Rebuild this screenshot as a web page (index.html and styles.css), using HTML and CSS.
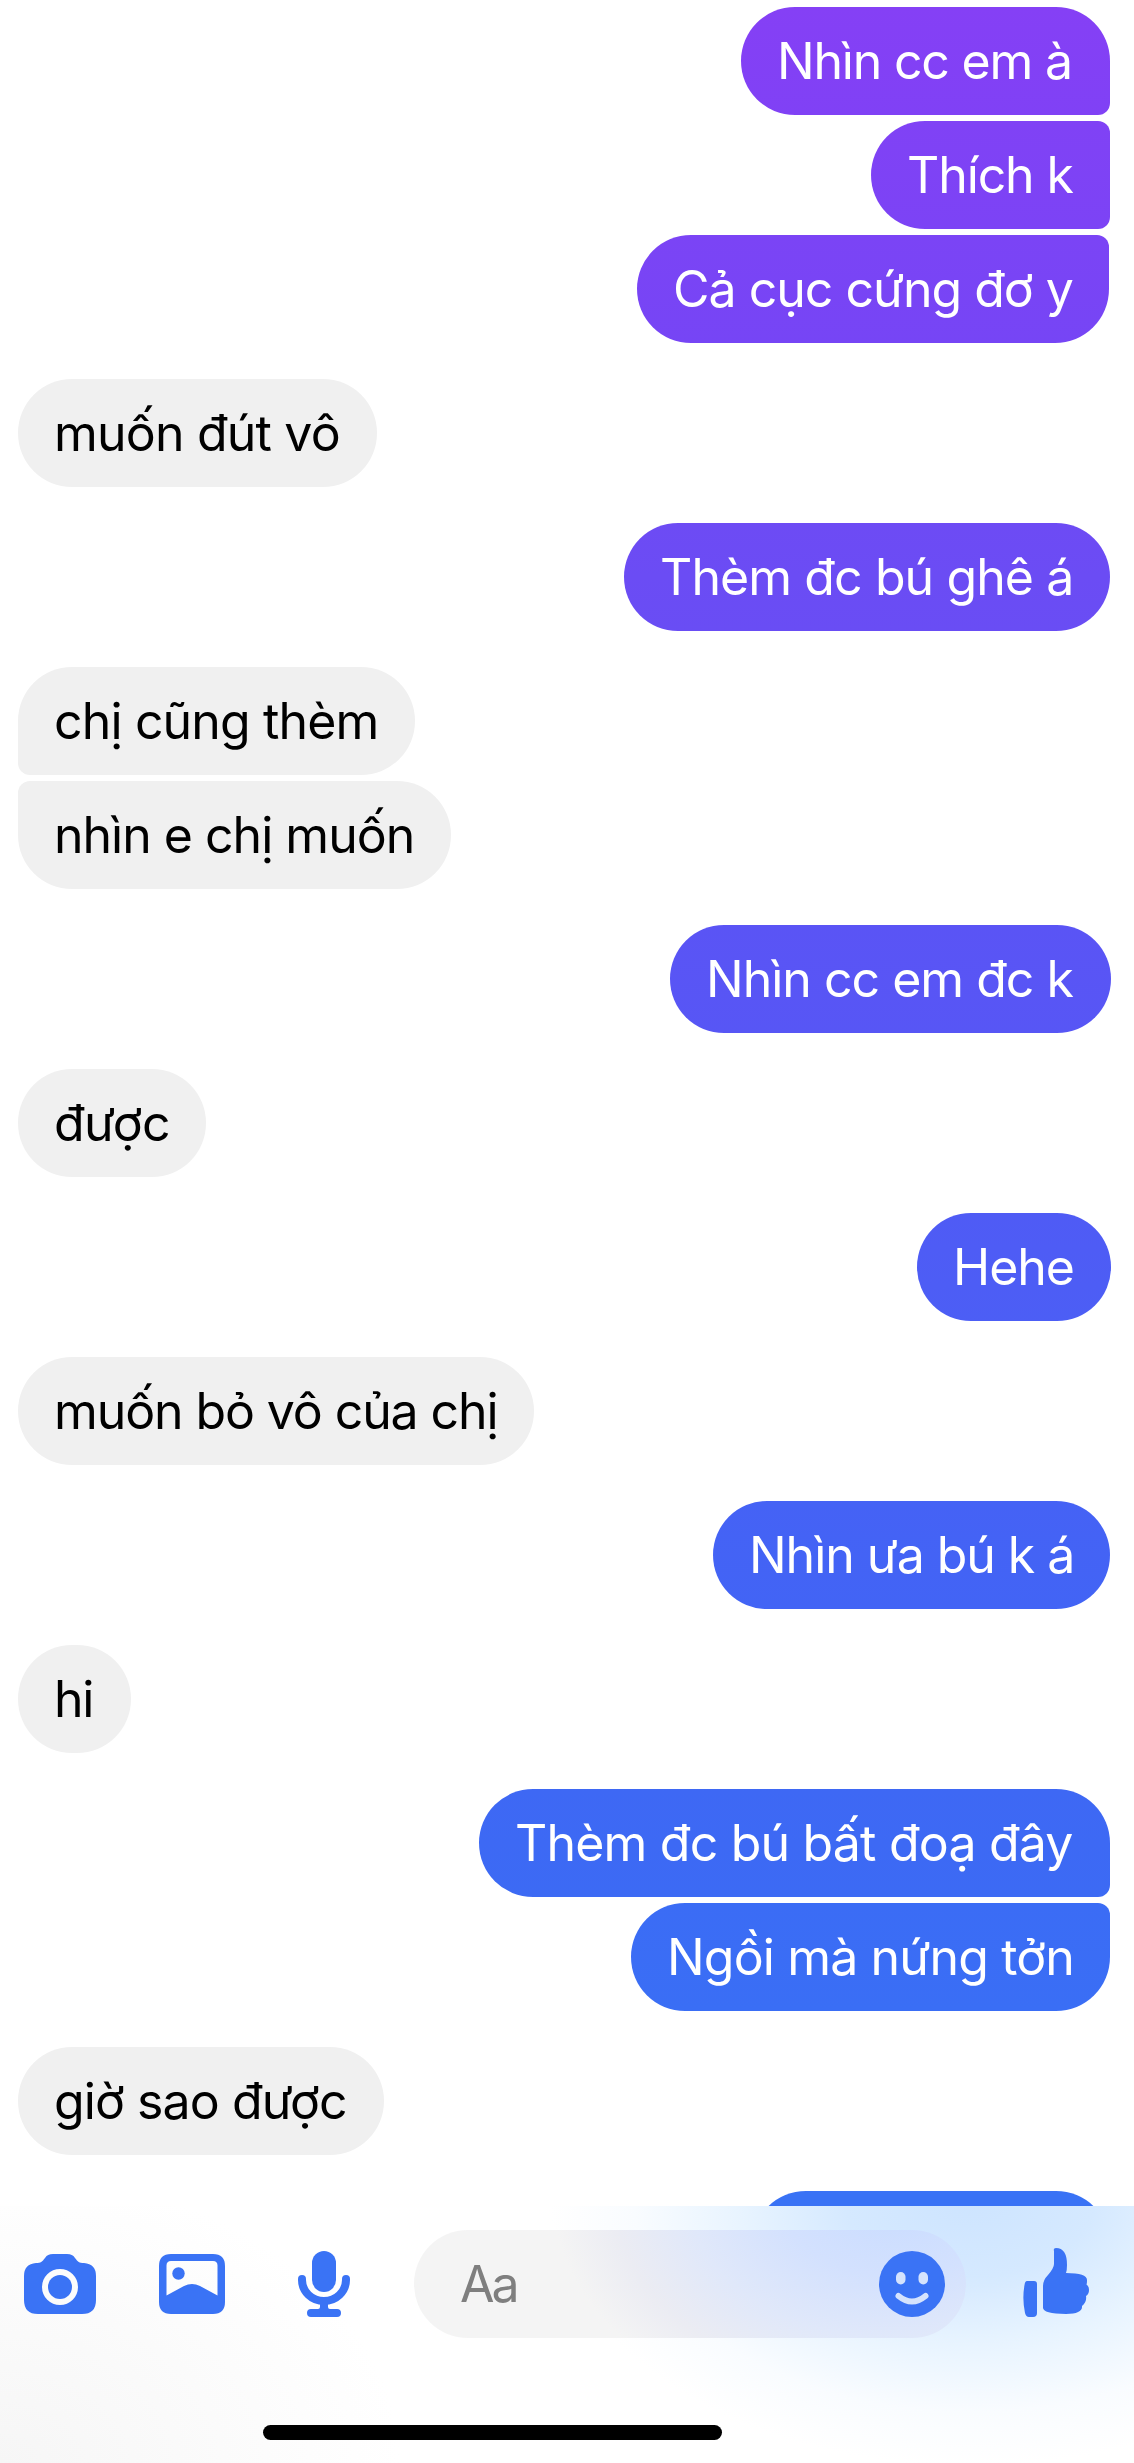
FILE: index.html
```html
<!DOCTYPE html>
<html lang="vi">
<head>
<meta charset="utf-8">
<title>Chat</title>
<link rel="stylesheet" href="styles.css">
</head>
<body>
<main class="screen">
  <section class="thread">
    <div class="group sent">
      <p class="bubble c1" style="width:369px;letter-spacing:-1.2px"><span>Nhìn cc em à</span></p>
      <p class="bubble c2" style="width:239px;letter-spacing:-1.1px"><span>Thích k</span></p>
      <p class="bubble c3" style="width:472px;letter-spacing:-1px"><span>Cả cục cứng đơ y</span></p>
    </div>
    <div class="group received"><p class="bubble" style="width:359px;letter-spacing:-.8px"><span>muốn đút vô</span></p></div>
    <div class="group sent"><p class="bubble c4" style="width:486px;letter-spacing:-.9px"><span>Thèm đc bú ghê á</span></p></div>
    <div class="group received">
      <p class="bubble" style="width:397px;letter-spacing:-.85px"><span>chị cũng thèm</span></p>
      <p class="bubble" style="width:433px;letter-spacing:-1px"><span>nhìn e chị muốn</span></p>
    </div>
    <div class="group sent"><p class="bubble wide c5" style="width:441px;letter-spacing:-1px"><span>Nhìn cc em đc k</span></p></div>
    <div class="group received"><p class="bubble" style="width:188px;letter-spacing:-.6px"><span>được</span></p></div>
    <div class="group sent"><p class="bubble wide c6" style="width:194px;letter-spacing:-1px"><span>Hehe</span></p></div>
    <div class="group received"><p class="bubble" style="width:516px;letter-spacing:-1.1px"><span>muốn bỏ vô của chị</span></p></div>
    <div class="group sent"><p class="bubble c7" style="width:397px;letter-spacing:-1.05px"><span>Nhìn ưa bú k á</span></p></div>
    <div class="group received"><p class="bubble" style="width:113px;letter-spacing:-1.2px"><span>hi</span></p></div>
    <div class="group sent">
      <p class="bubble c8" style="width:631px;letter-spacing:-.8px"><span>Thèm đc bú bất đoạ đây</span></p>
      <p class="bubble c9" style="width:479px;letter-spacing:-.85px"><span>Ngồi mà nứng tởn</span></p>
    </div>
    <div class="group received"><p class="bubble" style="width:366px;letter-spacing:-.9px"><span>giờ sao được</span></p></div>
    <div class="group sent"><p class="bubble c10" style="width:358px"></p></div>
  </section>
  <footer class="composer">
    <div class="toolbar">
      <svg class="icon camera" viewBox="0 0 72 60"><path fill-rule="evenodd" d="M12 9C17 9 18 8 21 4C23 1 25 0 29 0H43C47 0 49 1 51 4C54 8 55 9 60 9Q72 10 72 22V46Q72 60 58 60H14Q0 60 0 46V22Q0 10 12 9ZM36 15A18 18 0 1 0 36 51A18 18 0 1 0 36 15Z"/><circle cx="36" cy="33" r="12"/></svg>
      <svg class="icon photo" viewBox="0 0 66 60"><path fill-rule="evenodd" d="M12 0H54Q66 0 66 12V48Q66 60 54 60H12Q0 60 0 48V12Q0 0 12 0ZM12 7Q7.500 7 7.500 11.500V41.500L25 32Q33 28 41 32L58.500 41.500V11.500Q58.500 7 54 7Z"/><circle cx="19.500" cy="19.500" r="6.200"/></svg>
      <svg class="icon mic" viewBox="0 0 52 66"><rect x="14" y="0" width="24" height="41" rx="12"/><path class="line" d="M4 28V29A22 21 0 0 0 48 29V28"/><path d="M22 50H30V56Q30 58 32 58H39Q43 58 43 62Q43 66 39 66H13Q9 66 9 62Q9 58 13 58H20Q22 58 22 56Z"/></svg>
      <div class="field"><span class="hint">Aa</span>
        <svg class="icon smile" viewBox="0 0 66 66"><circle cx="33" cy="33" r="33"/><g class="face"><rect x="17" y="21" width="9.500" height="12.500" rx="4.750"/><rect x="39.500" y="21" width="9.500" height="12.500" rx="4.750"/><path d="M19.500 45Q33 56 46.500 45"/></g></svg>
      </div>
      <svg class="icon like" viewBox="0 0 66 69"><path d="M4 33H11Q14 33 14 36V65Q14 69 10 69H6Q3 69 2 65Q-1 51 1.500 37Q2 33 4 33Z"/><path d="M31 3Q30 0 33 0Q44 0 44 17Q44 22 43 25Q65 25 64 33Q64 35 63.500 36.500Q66 38 66 42Q66 46 63 48Q64 54 59 58Q60 66 43 66Q19 66 20 59V38Q20 32 25 27Q31 20 31 16Z"/></svg>
    </div>
    <div class="home"></div>
  </footer>
</main>
</body>
</html>
```
FILE: styles.css
```css
* { box-sizing: border-box; }
body { margin: 0; background: #fff; font-family: Inter, "Noto Sans", sans-serif; }
.screen { width: 1134px; height: 2463px; display: flex; flex-direction: column; overflow: hidden; }
.thread { height: 2206px; flex: none; overflow: hidden; padding: 7px 24px 0 18px; display: flex; flex-direction: column; gap: 36px; }
.group { display: flex; flex-direction: column; gap: 6px; flex: none; align-items: flex-start; }
.sent { align-items: flex-end; color: #fff; }
.received { color: #000; }
.bubble { margin: 0; height: 108px; padding: 0 36px; border-radius: 54px; font-size: 50px; line-height: 108px; white-space: nowrap; }
.wide { margin-right: -1px; }
.received .bubble { background: #f0f0f0; }
.sent .bubble:not(:last-child) { border-bottom-right-radius: 12px; }
.sent .bubble:not(:first-child) { border-top-right-radius: 12px; }
.received .bubble:not(:last-child) { border-bottom-left-radius: 12px; }
.received .bubble:not(:first-child) { border-top-left-radius: 12px; }
.c1 { background: linear-gradient(#8540f5, #8041f5); }
.c2 { background: linear-gradient(#8042f5, #7c43f5); }
.sent .c3 { background: linear-gradient(#7b44f5, #7645f5); margin-right: 1px; }
.c4 { background: linear-gradient(#6d4bf4, #694df4); }
.c5 { background: linear-gradient(#5a54f5, #5756f5); }
.c6 { background: linear-gradient(#4f5bf5, #4c5ef5); }
.c7 { background: linear-gradient(#4562f5, #4264f5); }
.c8 { background: linear-gradient(#3e68f4, #3c6af4); }
.c9 { background: linear-gradient(#3b6cf5, #3a6ef5); }
.c10 { background: #3972f5; }
.composer {
  height: 257px; flex: none; display: flex; flex-direction: column; align-items: center; justify-content: space-between; padding: 24px 0 23px;
  background:
    radial-gradient(ellipse 420px 270px at 970px -10px, #cde4ff, #d5e9ff 30%, rgba(228,242,255,.85) 55%, rgba(245,250,255,.6) 80%, rgba(255,255,255,0)),
    radial-gradient(ellipse 400px 290px at 0 100%, #f6f6f6, #fff);
}
.toolbar { width: 100%; height: 108px; display: flex; align-items: center; padding-left: 24px; }
.icon { display: block; flex: none; fill: #3a73f5; }
.camera { width: 72px; height: 60px; margin-right: 63px; }
.photo { width: 66px; height: 60px; margin-right: 73px; }
.mic { width: 52px; height: 66px; margin-right: 64px; }
.line { fill: none; stroke: #3a73f5; stroke-width: 8; stroke-linecap: round; }
.field {
  width: 552px; height: 108px; border-radius: 54px; display: flex; align-items: center; justify-content: space-between; padding: 0 21px 0 46px;
  background: radial-gradient(ellipse 340px 230px at 480px -30px, #c9dcff, #d3e1fe 33%, #e0e8fa 60%, #ebecf3 82%, #f4f4f4);
}
.hint { color: #7f7f7f; font-size: 50px; letter-spacing: -3px; }
.smile { width: 66px; height: 66px; }
.face { fill: #d5e3fd; }
.face path { fill: none; stroke: #d5e3fd; stroke-width: 6; stroke-linecap: round; }
.like { width: 66px; height: 69px; margin: 0 0 3px 57px; }
.home { width: 459px; height: 15px; border-radius: 8px; background: #000; margin-right: 149px; }
```
